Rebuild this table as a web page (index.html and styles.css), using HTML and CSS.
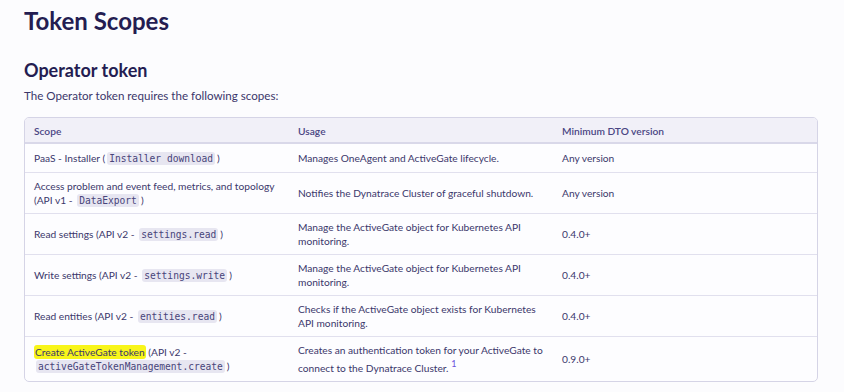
FILE: index.html
```html
<!DOCTYPE html>
<html lang="en">
<head>
<meta charset="utf-8">
<title>Token Scopes</title>
<link rel="stylesheet" href="styles.css">
</head>
<body>
<main class="page">
  <h1 class="title">Token Scopes</h1>
  <h2 class="subtitle">Operator token</h2>
  <p class="intro">The Operator token requires the following scopes:</p>
  <div class="table-wrap">
    <table class="scopes">
      <thead>
        <tr><th>Scope</th><th>Usage</th><th>Minimum DTO version</th></tr>
      </thead>
      <tbody>
        <tr>
          <td>PaaS - Installer (<code>Installer download</code>)</td>
          <td>Manages OneAgent and ActiveGate lifecycle.</td>
          <td>Any version</td>
        </tr>
        <tr>
          <td>Access problem and event feed, metrics, and topology (API v1 - <code>DataExport</code>)</td>
          <td>Notifies the Dynatrace Cluster of graceful shutdown.</td>
          <td>Any version</td>
        </tr>
        <tr>
          <td>Read settings (API v2 - <code>settings.read</code>)</td>
          <td>Manage the ActiveGate object for Kubernetes API monitoring.</td>
          <td>0.4.0+</td>
        </tr>
        <tr>
          <td>Write settings (API v2 - <code>settings.write</code>)</td>
          <td>Manage the ActiveGate object for Kubernetes API monitoring.</td>
          <td>0.4.0+</td>
        </tr>
        <tr>
          <td>Read entities (API v2 - <code>entities.read</code>)</td>
          <td>Checks if the ActiveGate object exists for Kubernetes API monitoring.</td>
          <td>0.4.0+</td>
        </tr>
        <tr>
          <td><mark class="hl">Create ActiveGate token</mark> (API v2 - <code>activeGateTokenManagement.create</code>)</td>
          <td>Creates an authentication token for your ActiveGate to connect to the Dynatrace Cluster. <sup class="fn">1</sup></td>
          <td>0.9.0+</td>
        </tr>
      </tbody>
    </table>
  </div>
</main>
</body>
</html>
```
FILE: styles.css
```css
html, body {
  margin: 0;
  padding: 0;
  background: #fcfcfe;
}
body {
  font-family: Lato, "Open Sans", "Liberation Sans", sans-serif;
  color: #3b376b;
}
.page {
  padding: 6px 26px 0 24px;
}
.title {
  margin: 0;
  font-size: 24px;
  line-height: 30px;
  font-weight: 700;
  color: #241d52;
}
.subtitle {
  margin: 23px 0 0 0;
  font-size: 18px;
  line-height: 22px;
  font-weight: 700;
  color: #241d52;
}
.intro {
  margin: 7px 0 0 0;
  font-size: 11.6px;
  line-height: 16px;
  color: #3b376b;
}
.table-wrap {
  margin-top: 13px;
  border: 1px solid #d5d4e6;
  border-radius: 5px;
  overflow: hidden;
  background: #fdfdff;
}
.scopes {
  width: 100%;
  border-collapse: collapse;
  table-layout: fixed;
  font-family: Lato, "Open Sans", sans-serif;
  font-size: 10.2px;
  line-height: 14px;
}
.scopes th {
  text-align: left;
  font-weight: 600;
  color: #4a4583;
  background: #f1f0f8;
  padding: 6px 9px 4px;
  border-bottom: 2px solid #d9d8e9;
}
.scopes td {
  padding: 6px 9px;
  vertical-align: middle;
  border-top: 1px solid #e1e0ee;
}
.scopes tbody tr:first-child td {
  border-top: none;
  padding-top: 7px;
  padding-bottom: 7px;
}
.scopes code {
  font-family: "DejaVu Sans Mono", "Liberation Mono", monospace;
  font-size: 9.6px;
  line-height: 1;
  background: #e7e6f1;
  color: #48447a;
  border-radius: 3px;
  padding: 1px 2px;
  margin: 0 2px;
}
.hl {
  background: #f8f51a;
  color: #3b376b;
  padding: 1px 1px;
  border-radius: 3px;
}
.fn {
  color: #6a4fdc;
  font-size: 9px;
  line-height: 14px;
  vertical-align: 5px;
}
```
